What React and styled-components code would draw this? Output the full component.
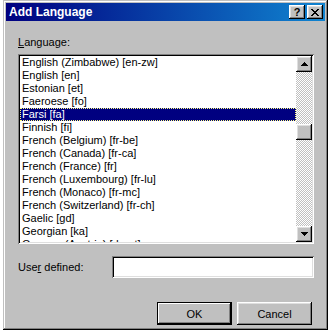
import React from "react";
import styled, { createGlobalStyle } from "styled-components";

const GlobalStyle = createGlobalStyle`
html, body {
  margin: 0;
  padding: 0;
  background: #fff;
}
body {
  font-family: "Liberation Sans", Arial, sans-serif;
  font-size: 11px;
  color: #000;
}
`;

const raised = `
  box-shadow: inset -1px -1px #000, inset 1px 1px #fff, inset -2px -2px #808080, inset 2px 2px #dfdfdf;
`;

const sunken = `
  box-shadow: inset 1px 1px #808080, inset -1px -1px #fff, inset 2px 2px #000, inset -2px -2px #dfdfdf;
`;

const Window = styled.div`
  margin-left: 3px;
  width: 325px;
  height: 330px;
  box-sizing: border-box;
  padding: 3px;
  background: #c0c0c0;
  box-shadow: inset -1px -1px #000, inset 1px 1px #c0c0c0, inset -2px -2px #808080, inset 2px 2px #fff;
  display: flex;
  flex-direction: column;
`;

const TitleBar = styled.div`
  height: 18px;
  display: flex;
  align-items: center;
  padding: 0 2px 0 3px;
  background: linear-gradient(90deg, #000080, #1084d0);
  color: #fff;
  font-weight: bold;
  font-size: 12px;
`;

const Title = styled.div`
  flex: 1;
`;

const TitleButtons = styled.div`
  display: flex;
  gap: 2px;
`;

const TitleButton = styled.div`
  width: 16px;
  height: 14px;
  box-sizing: border-box;
  background: #c0c0c0;
  ${raised}
  display: flex;
  align-items: center;
  justify-content: center;
  color: #000;
  font-weight: bold;
  font-size: 11px;
  line-height: 14px;
`;

const Content = styled.div`
  flex: 1;
  display: flex;
  flex-direction: column;
  padding: 15px 11px 0 12px;
`;

const Label = styled.div`
  line-height: 13px;
  height: 13px;
  margin-bottom: 5px;
`;

const ListBox = styled.div`
  width: 296px;
  height: 190px;
  box-sizing: border-box;
  padding: 2px;
  background: #fff;
  ${sunken}
  display: flex;
`;

const Items = styled.div`
  flex: 1;
  overflow: hidden;
`;

const Item = styled.div`
  height: 13px;
  line-height: 13px;
  padding-left: 2px;
  white-space: nowrap;
  box-sizing: border-box;
  background: ${(p) => (p.$selected ? "#000080" : "transparent")};
  color: ${(p) => (p.$selected ? "#fff" : "#000")};
  outline: ${(p) => (p.$selected ? "1px dotted #ffff80" : "none")};
  outline-offset: -1px;
`;

const ScrollBar = styled.div`
  width: 16px;
  display: flex;
  flex-direction: column;
`;

const ScrollButton = styled.div`
  width: 16px;
  height: 16px;
  box-sizing: border-box;
  background: #c0c0c0;
  ${raised}
  display: flex;
  align-items: center;
  justify-content: center;
`;

const Track = styled.div`
  flex: 1;
  background: repeating-conic-gradient(#c0c0c0 0 25%, #fff 0 50%) 0 0 / 2px 2px;
  padding-top: ${(p) => p.$offset}px;
`;

const Thumb = styled(ScrollButton)``;

const UserRow = styled.div`
  display: flex;
  align-items: center;
  margin-top: 12px;
`;

const UserLabel = styled.div`
  width: 94px;
`;

const TextBox = styled.div`
  width: 202px;
  height: 22px;
  box-sizing: border-box;
  background: #fff;
  ${sunken}
`;

const ButtonRow = styled.div`
  display: flex;
  justify-content: flex-end;
  gap: 5px;
  margin-top: 24px;
  padding-right: 2px;
`;

const Button = styled.div`
  width: 75px;
  height: 23px;
  box-sizing: border-box;
  background: #c0c0c0;
  display: flex;
  align-items: center;
  justify-content: center;
  ${(p) =>
    p.$default
      ? "box-shadow: inset 0 0 0 1px #000, inset -2px -2px #000, inset 2px 2px #fff, inset -3px -3px #808080;"
      : "box-shadow: inset -1px -1px #000, inset 1px 1px #fff, inset -2px -2px #808080, inset 2px 2px #dfdfdf;"}
`;

const Arrow = ({ down }) => (
  <svg width="7" height="4" viewBox="0 0 7 4" style={{ transform: down ? "rotate(180deg)" : "none" }}>
    <path d="M3 0h1v1h1v1h1v1h1v1H0V3h1V2h1V1h1z" fill="#000" />
  </svg>
);

const CloseIcon = () => (
  <svg width="8" height="7" viewBox="0 0 8 7">
    <path
      d="M0 0h2v1h1v1h2V1h1V0h2v1H7v1H6v1H5v1h1v1h1v1h1v1H6V6H5V5H3v1H2v1H0V6h1V5h1V4h1V3H2V2H1V1H0z"
      fill="#000"
    />
  </svg>
);

const languages = [
  "English (Zimbabwe) [en-zw]",
  "English [en]",
  "Estonian [et]",
  "Faeroese [fo]",
  "Farsi [fa]",
  "Finnish [fi]",
  "French (Belgium) [fr-be]",
  "French (Canada) [fr-ca]",
  "French (France) [fr]",
  "French (Luxembourg) [fr-lu]",
  "French (Monaco) [fr-mc]",
  "French (Switzerland) [fr-ch]",
  "Gaelic [gd]",
  "Georgian [ka]",
  "German (Austria) [de-at]",
];

export default function App() {
  return (
    <>
      <GlobalStyle />
      <Window>
        <TitleBar>
          <Title>Add Language</Title>
          <TitleButtons>
            <TitleButton>?</TitleButton>
            <TitleButton>
              <CloseIcon />
            </TitleButton>
          </TitleButtons>
        </TitleBar>
        <Content>
          <Label>
            <u>L</u>anguage:
          </Label>
          <ListBox>
            <Items>
              {languages.map((l) => (
                <Item key={l} $selected={l === "Farsi [fa]"}>
                  {l}
                </Item>
              ))}
            </Items>
            <ScrollBar>
              <ScrollButton>
                <Arrow />
              </ScrollButton>
              <Track $offset={52}>
                <Thumb />
              </Track>
              <ScrollButton>
                <Arrow down />
              </ScrollButton>
            </ScrollBar>
          </ListBox>
          <UserRow>
            <UserLabel>
              Use<u>r</u> defined:
            </UserLabel>
            <TextBox />
          </UserRow>
          <ButtonRow>
            <Button $default>OK</Button>
            <Button>Cancel</Button>
          </ButtonRow>
        </Content>
      </Window>
    </>
  );
}
